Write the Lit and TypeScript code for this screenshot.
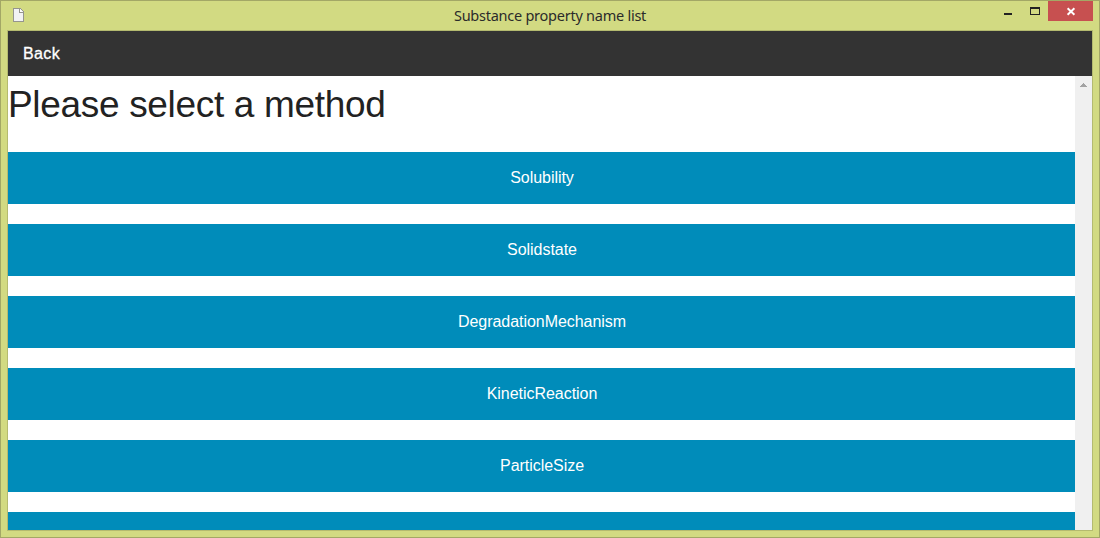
import { LitElement, html, css } from "lit";
import { customElement } from "lit/decorators.js";

const METHODS = [
  "Solubility",
  "Solidstate",
  "DegradationMechanism",
  "KineticReaction",
  "ParticleSize",
  "",
];

@customElement("app-root")
export class AppRoot extends LitElement {
  static styles = css`
    :host {
      display: block;
      font-family: "Liberation Sans", Arial, sans-serif;
    }
    .window {
      box-sizing: border-box;
      width: 1100px;
      height: 538px;
      border: 1px solid #a3a766;
      background: #d2da82;
      display: flex;
      flex-direction: column;
      padding: 0 6px 6px;
      overflow: hidden;
    }
    .titlebar {
      height: 29px;
      flex: none;
      display: grid;
      grid-template-columns: 150px 1fr 150px;
    }
    .doc {
      margin: 7px 0 0 6px;
      display: block;
    }
    .title {
      font: 14.5px/29px "Noto Sans", "Open Sans", sans-serif;
      letter-spacing: -0.25px;
      text-align: center;
      color: #2b2b2b;
      white-space: nowrap;
    }
    .controls {
      display: flex;
      justify-content: flex-end;
      height: 20px;
    }
    .controls svg {
      display: block;
      flex: none;
    }
    .frame {
      flex: 1;
      min-height: 0;
      border: 1px solid #b4ba70;
      background: #fff;
      display: flex;
      flex-direction: column;
      overflow: hidden;
    }
    .nav {
      height: 45px;
      flex: none;
      background: #333;
      box-sizing: border-box;
      padding-left: 15px;
      color: #fff;
      font-size: 16px;
      line-height: 45px;
    }
    .back {
      letter-spacing: 0.4px;
      -webkit-text-stroke: 0.3px #fff;
    }
    .body {
      flex: 1;
      min-height: 0;
      display: flex;
    }
    .content {
      flex: 1;
      overflow: hidden;
    }
    h1 {
      margin: 3px 0 21px;
      font-size: 37px;
      line-height: 52px;
      font-weight: 400;
      letter-spacing: -0.32px;
      color: #222;
      white-space: nowrap;
    }
    .method {
      height: 52px;
      margin-bottom: 20px;
      padding-left: 1px;
      background: #008cba;
      color: #fff;
      font-size: 16px;
      line-height: 52px;
      letter-spacing: -0.04px;
      text-align: center;
    }
    .scroll {
      width: 17px;
      flex: none;
      background: #f0f0f0;
    }
    .scroll svg {
      display: block;
    }
  `;

  render() {
    return html`
      <div class="window">
        <div class="titlebar">
          <svg class="doc" width="12" height="15" shape-rendering="crispEdges">
            <path d="M0.5 0.5H7.5L10.5 3.5V13.5H0.5Z" fill="#f2f2f4" stroke="#95958e" />
            <path d="M6.5 1V4.5H10" fill="none" stroke="#95958e" />
            <path d="M7 2h1v1h1v1h-2z" fill="#fff" />
          </svg>
          <div class="title">Substance property name list</div>
          <div class="controls">
            <svg width="93" height="20" shape-rendering="crispEdges">
              <rect x="48" width="45" height="20" fill="#c75050" />
              <rect x="4" y="12" width="8" height="2" fill="#222" />
              <path d="M30 6h10v8h-10z M31 8v5h8v-5z" fill="#222" fill-rule="evenodd" />
              <path
                d="M67.6 7.2L74.4 13.8M74.4 7.2L67.6 13.8"
                stroke="#fff"
                stroke-width="1.9"
                fill="none"
                shape-rendering="geometricPrecision"
              />
            </svg>
          </div>
        </div>
        <div class="frame">
          <div class="nav"><span class="back">Back</span></div>
          <div class="body">
            <div class="content">
              <h1>Please select a method</h1>
              ${METHODS.map((m) => html`<div class="method">${m}</div>`)}
            </div>
            <div class="scroll">
              <svg width="17" height="17" shape-rendering="crispEdges">
                <path d="M8 7h1v1h1v1h1v1h1v1h-7v-1h1v-1h1v-1h1z" fill="#a3a3a3" />
              </svg>
            </div>
          </div>
        </div>
      </div>
    `;
  }
}
